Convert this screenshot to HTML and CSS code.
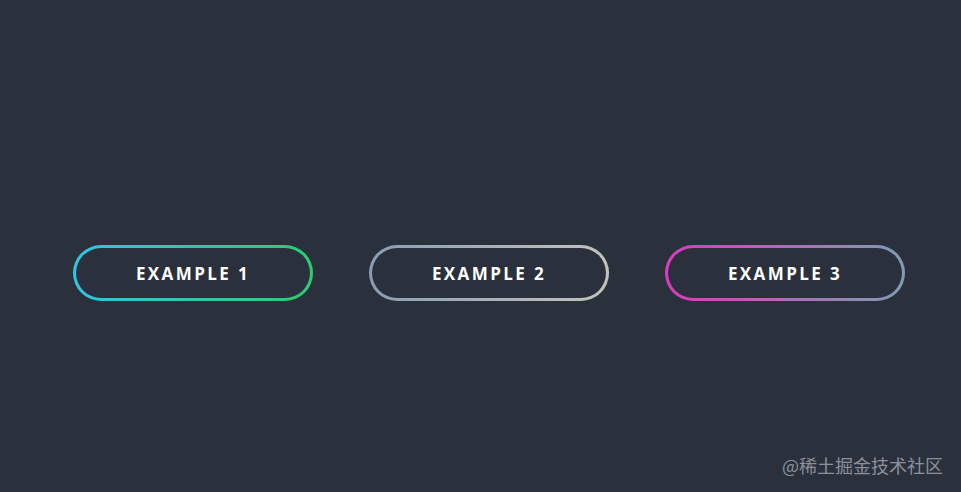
FILE: index.html
```
<!DOCTYPE html>
<html lang="zh">
<head>
<meta charset="utf-8">
<title>Gradient Buttons</title>
<link rel="stylesheet" href="styles.css">
</head>
<body>
<main class="stage">
  <div class="row">
    <button class="btn btn-1">Example 1</button>
    <button class="btn btn-2">Example 2</button>
    <button class="btn btn-3">Example 3</button>
  </div>
</main>
<div class="watermark">@稀土掘金技术社区</div>
</body>
</html>
```
FILE: styles.css
```
html, body {
  margin: 0;
  padding: 0;
}
body {
  width: 961px;
  height: 492px;
  background: #2b303d;
  overflow: hidden;
  position: relative;
  font-family: "Open Sans", "Noto Sans", sans-serif;
}
.stage {
  padding: 245px 0 0 73px;
}
.row {
  display: flex;
  gap: 56px;
}
.btn {
  width: 240px;
  height: 56px;
  box-sizing: border-box;
  border: 3px solid transparent;
  border-radius: 28px;
  color: #ffffff;
  font-family: "Open Sans", "Noto Sans", sans-serif;
  font-weight: 700;
  font-size: 17px;
  letter-spacing: 2.4px;
  text-transform: uppercase;
  padding: 0;
  cursor: pointer;
}
.btn-1 {
  background: linear-gradient(#2b303d, #2b303d) padding-box,
              linear-gradient(90deg, #30c5e3, #2bcc70) border-box;
}
.btn-2 {
  background: linear-gradient(#2b303d, #2b303d) padding-box,
              linear-gradient(90deg, #8b9db3, #c4c3bb) border-box;
}
.btn-3 {
  background: linear-gradient(#2b303d, #2b303d) padding-box,
              linear-gradient(90deg, #dc3ac0, #7d9eb2) border-box;
}
.watermark {
  position: absolute;
  right: 18px;
  bottom: 16px;
  color: #8c909a;
  font-family: "Noto Sans CJK SC", sans-serif;
  font-size: 18px;
  line-height: 22px;
}
```
